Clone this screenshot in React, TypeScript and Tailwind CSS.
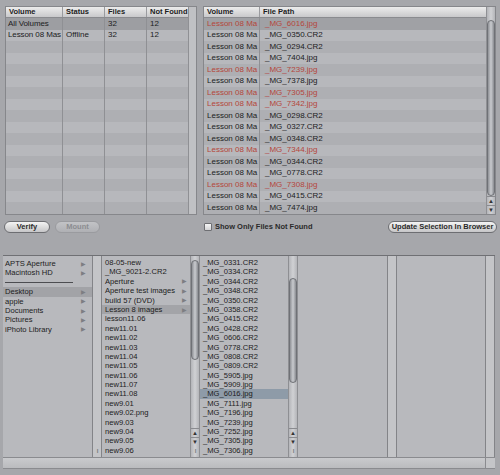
import React from 'react'

const FONT = { fontFamily: '"Liberation Sans", Arial, sans-serif' }

const rightRows: { f: string; red?: boolean }[] = [
  { f: '_MG_6016.jpg', red: true },
  { f: '_MG_0350.CR2' },
  { f: '_MG_0294.CR2' },
  { f: '_MG_7404.jpg' },
  { f: '_MG_7239.jpg', red: true },
  { f: '_MG_7378.jpg' },
  { f: '_MG_7305.jpg', red: true },
  { f: '_MG_7342.jpg', red: true },
  { f: '_MG_0298.CR2' },
  { f: '_MG_0327.CR2' },
  { f: '_MG_0348.CR2' },
  { f: '_MG_7344.jpg', red: true },
  { f: '_MG_0344.CR2' },
  { f: '_MG_0778.CR2' },
  { f: '_MG_7308.jpg', red: true },
  { f: '_MG_0415.CR2' },
  { f: '_MG_7474.jpg' },
]

const leftRows = [
  { v: 'All Volumes', s: '', f: '32', n: '12' },
  { v: 'Lesson 08 Mas', s: 'Offline', f: '32', n: '12' },
  ...Array.from({ length: 15 }, () => ({ v: '', s: '', f: '', n: '' })),
]

const sources = ['Desktop', 'apple', 'Documents', 'Pictures', 'iPhoto Library']

const folderItems: { n: string; arrow?: boolean }[] = [
  { n: '08-05-new' },
  { n: '_MG_9021-2.CR2' },
  { n: 'Aperture', arrow: true },
  { n: 'Aperture test images', arrow: true },
  { n: 'build 57 (DVD)', arrow: true },
  { n: 'Lesson 8 images', arrow: true },
  { n: 'lesson11.06' },
  { n: 'new11.01' },
  { n: 'new11.02' },
  { n: 'new11.03' },
  { n: 'new11.04' },
  { n: 'new11.05' },
  { n: 'new11.06' },
  { n: 'new11.07' },
  { n: 'new11.08' },
  { n: 'new9.01' },
  { n: 'new9.02.png' },
  { n: 'new9.03' },
  { n: 'new9.04' },
  { n: 'new9.05' },
  { n: 'new9.06' },
]

const imageItems = [
  '_MG_0331.CR2', '_MG_0334.CR2', '_MG_0344.CR2', '_MG_0348.CR2', '_MG_0350.CR2',
  '_MG_0358.CR2', '_MG_0415.CR2', '_MG_0428.CR2', '_MG_0606.CR2', '_MG_0778.CR2',
  '_MG_0808.CR2', '_MG_0809.CR2', '_MG_5905.jpg', '_MG_5909.jpg', '_MG_6016.jpg',
  '_MG_7111.jpg', '_MG_7196.jpg', '_MG_7239.jpg', '_MG_7252.jpg', '_MG_7305.jpg',
  '_MG_7306.jpg',
]

const Arrow = () => (
  <span className="text-[6px] text-[#7d7e82] leading-none">▶</span>
)

const Thumb = ({ className = '' }: { className?: string }) => (
  <div
    className={`mx-auto w-[8px] rounded-full border border-[#6f7176] bg-gradient-to-r from-[#8f9196] via-[#c9cbcf] to-[#8a8c91] ${className}`}
  />
)

const StepArrows = () => (
  <div className="flex flex-col items-center text-[6px] leading-[8px] text-[#333]">
    <span className="border-t border-[#8a8b8f] w-full text-center">▲</span>
    <span className="border-t border-[#8a8b8f] w-full text-center">▼</span>
  </div>
)

const Handle = () => (
  <div className="h-[11px] flex items-center justify-center text-[6px] text-[#7a7b7f] tracking-[-1px]">ll</div>
)

const BrowserScroll = ({ top, height }: { top: string; height: string }) => (
  <div className="w-[10px] flex flex-col bg-gradient-to-r from-[#b4b5b9] via-[#d0d1d4] to-[#b4b5b9] border-x border-[#8e8f93]">
    <div className={top} />
    <Thumb className={height} />
    <div className="flex-1" />
    <StepArrows />
    <Handle />
  </div>
)

const Strip = ({ handle = true }: { handle?: boolean }) => (
  <div className="w-[10px] flex flex-col bg-[#c4c5c8] border-x border-[#838488]">
    <div className="flex-1" />
    {handle && <Handle />}
  </div>
)

const Button = ({ label, disabled, className = '' }: { label: string; disabled?: boolean; className?: string }) => (
  <button
    className={`h-[12px] rounded-full border text-[7.5px] font-bold leading-none flex items-center justify-center ${
      disabled
        ? 'border-[#9a9b9f] bg-gradient-to-b from-[#c2c3c6] to-[#afb0b4] text-[#8c8d91]'
        : 'border-[#6d6e72] bg-gradient-to-b from-[#f4f4f4] via-[#dcdcdc] to-[#c6c6c8] text-[#2a2a2a]'
    } ${className}`}
  >
    {label}
  </button>
)

export default function App() {
  return (
    <div className="w-[500px] h-[475px] bg-[#a6a7ab] overflow-hidden text-[#1c1c1c]" style={FONT}>
      {/* top tables */}
      <div className="flex pt-[6px] pl-[5px] gap-[6px]">
        <div className="w-[192px] h-[209px] flex border border-[#86878b] overflow-hidden">
          <div className="flex-1 flex flex-col">
            <div className="h-[11px] flex bg-gradient-to-b from-[#ececec] to-[#c9c9cb] border-b border-[#8a8b8f] text-[7.5px] font-bold">
              <div className="w-[57px] pl-[3px] border-r border-[#9a9b9f] flex items-center">Volume</div>
              <div className="w-[42px] pl-[3px] border-r border-[#9a9b9f] flex items-center">Status</div>
              <div className="w-[42px] pl-[3px] border-r border-[#9a9b9f] flex items-center">Files</div>
              <div className="flex-1 pl-[3px] flex items-center">Not Found</div>
            </div>
            {leftRows.map((r, i) => (
              <div
                key={i}
                className={`h-[11.5px] flex text-[8px] ${
                  i === 0 ? 'bg-[#9d9ea2]' : i % 2 === 1 ? 'bg-[#b7b8bc]' : 'bg-[#aeafb3]'
                }`}
              >
                <div className="w-[57px] pl-[2px] border-r border-[#8f9094] flex items-center whitespace-nowrap overflow-hidden tracking-[-0.1px]">{r.v}</div>
                <div className="w-[42px] pl-[3px] border-r border-[#8f9094] flex items-center">{r.s}</div>
                <div className="w-[42px] pl-[3px] border-r border-[#8f9094] flex items-center">{r.f}</div>
                <div className="flex-1 pl-[3px] flex items-center">{r.n}</div>
              </div>
            ))}
          </div>
          <div className="w-[8px] bg-[#c0c1c4] border-l border-[#8f9094]" />
        </div>

        <div className="w-[293px] h-[209px] flex border border-[#86878b] overflow-hidden">
          <div className="flex-1 flex flex-col">
            <div className="h-[11px] flex bg-gradient-to-b from-[#ececec] to-[#c9c9cb] border-b border-[#8a8b8f] text-[7.5px] font-bold">
              <div className="w-[56px] pl-[3px] border-r border-[#9a9b9f] flex items-center">Volume</div>
              <div className="flex-1 pl-[3px] flex items-center">File Path</div>
            </div>
            {rightRows.map((r, i) => (
              <div
                key={i}
                className={`h-[11.5px] flex text-[8px] ${r.red ? 'text-[#b5463b]' : ''} ${
                  i === 0 ? 'bg-[#a0a1a5]' : i % 2 === 1 ? 'bg-[#b7b8bc]' : 'bg-[#aeafb3]'
                }`}
              >
                <div className="w-[56px] pl-[3px] border-r border-[#8f9094] flex items-center whitespace-nowrap overflow-hidden">Lesson 08 Ma</div>
                <div className="flex-1 pl-[5px] flex items-center">{r.f}</div>
              </div>
            ))}
          </div>
          <div className="w-[9px] flex flex-col bg-gradient-to-r from-[#b4b5b9] via-[#d0d1d4] to-[#b4b5b9] border-l border-[#8f9094]">
            <div className="h-[13px]" />
            <Thumb className="h-[177px] w-[7px]" />
            <div className="flex-1" />
            <StepArrows />
          </div>
        </div>
      </div>

      {/* buttons row */}
      <div className="mt-[6px] h-[12px] flex items-center pl-[4px] pr-[3px]">
        <Button label="Verify" className="w-[46px]" />
        <Button label="Mount" disabled className="w-[45px] ml-[5px]" />
        <div className="ml-[104px] flex items-center gap-[3px]">
          <div className="w-[8px] h-[8px] border border-[#6e6f73] bg-gradient-to-b from-[#f6f6f6] to-[#d2d2d4] rounded-[1px]" />
          <span className="text-[7.5px] font-bold text-[#2a2a2a]">Show Only Files Not Found</span>
        </div>
        <div className="flex-1" />
        <Button label="Update Selection In Browser" className="w-[109px]" />
      </div>

      {/* column browser */}
      <div className="mt-[22px] ml-[3px] w-[492px] h-[214px] flex flex-col border-t border-[#6f7074]">
        <div className="flex-1 flex bg-[#b8b9bd] text-[7.6px]">
          {/* sources */}
          <div className="w-[89px] flex flex-col pt-[3px]">
            <div className="h-[9.4px] pl-[2px] pr-[6px] flex items-center justify-between"><span>APTS Aperture</span><Arrow /></div>
            <div className="h-[9.4px] pl-[2px] pr-[6px] flex items-center justify-between"><span>Macintosh HD</span><Arrow /></div>
            <div className="h-[9.4px] flex items-center pl-[2px]">
              <div className="w-[68px] h-[1px] bg-[#4c4d51]" />
            </div>
            {sources.map((s, i) => (
              <div
                key={s}
                className={`h-[9.4px] pl-[2px] pr-[6px] flex items-center justify-between ${i === 0 ? 'bg-[#a2a3a7]' : ''}`}
              >
                <span>{s}</span>
                <Arrow />
              </div>
            ))}
          </div>
          <Strip />

          {/* folder column */}
          <div className="w-[88px] flex flex-col pt-[2px]">
            {folderItems.map((it, i) => (
              <div
                key={it.n}
                className={`h-[9.4px] pl-[3px] pr-[3px] flex items-center justify-between whitespace-nowrap ${i === 5 ? 'bg-[#a3a4a8]' : ''}`}
              >
                <span>{it.n}</span>
                {it.arrow && <Arrow />}
              </div>
            ))}
          </div>
          <BrowserScroll top="h-[4px]" height="h-[100px]" />

          {/* images column */}
          <div className="w-[88px] flex flex-col pt-[2px]">
            {imageItems.map((n, i) => (
              <div
                key={n}
                className={`h-[9.4px] pl-[3px] flex items-center whitespace-nowrap ${i === 14 ? 'bg-[#8e9ba8]' : ''}`}
              >
                {n}
              </div>
            ))}
          </div>
          <BrowserScroll top="h-[22px]" height="h-[105px]" />

          <div className="w-[2px]" />
          <div className="w-[87px]" />
          <Strip handle={false} />
          <div className="w-[88px]" />
          <Strip handle={false} />
        </div>
        <div className="h-[12px] flex bg-gradient-to-b from-[#c9cacd] to-[#babbbe] border-y border-[#8a8b8f]">
          <div className="flex-1" />
          <div className="w-[10px] border-l border-[#8a8b8f] bg-[#c4c5c8]" />
        </div>
      </div>
    </div>
  )
}
